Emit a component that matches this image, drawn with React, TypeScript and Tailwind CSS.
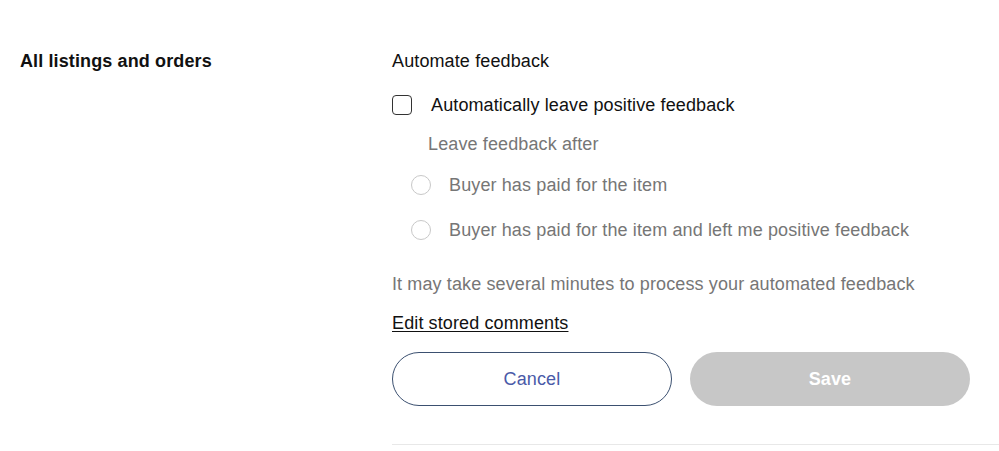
export default function App() {
  return (
    <div className="min-h-[451px] bg-white font-['Liberation_Sans',Arial,sans-serif] text-[18px] leading-6 tracking-[0.12px] text-[#111]">
      <div className="flex pl-5 pt-[49px]">
        <div className="w-[372px] shrink-0">
          <h2 className="font-bold">All listings and orders</h2>
        </div>

        <div className="flex-1">
          <p>Automate feedback</p>

          <label className="mt-5 flex h-6 items-center">
            <span className="h-[20px] w-[20px] rounded-[4px] border-[1.5px] border-[#333]" />
            <span className="ml-[19px]">Automatically leave positive feedback</span>
          </label>

          <p className="mt-[15px] pl-9 text-[#767676]">Leave feedback after</p>

          <label className="mt-[17px] flex h-6 items-center pl-[19px] text-[#767676]">
            <span className="h-[20px] w-[20px] rounded-full border-[1.5px] border-[#c8c8c8]" />
            <span className="ml-[18px]">Buyer has paid for the item</span>
          </label>

          <label className="mt-[21px] flex h-6 items-center pl-[19px] text-[#767676]">
            <span className="h-[20px] w-[20px] rounded-full border-[1.5px] border-[#c8c8c8]" />
            <span className="ml-[18px]">Buyer has paid for the item and left me positive feedback</span>
          </label>

          <p className="mt-[30px] text-[#767676]">
            It may take several minutes to process your automated feedback
          </p>

          <a href="#" className="mt-[15px] inline-block text-[#111] underline underline-offset-2">
            Edit stored comments
          </a>

          <div className="mt-[17px] flex gap-[18px]">
            <button className="h-[54px] w-[280px] rounded-full border border-[#3b5070] bg-white text-[#4a5aa8]">
              Cancel
            </button>
            <button className="h-[54px] w-[280px] rounded-full bg-[#c7c7c7] font-bold text-white">
              Save
            </button>
          </div>

          <div className="mt-[38px] border-t border-[#e8e8e8]" />
        </div>
      </div>
    </div>
  );
}
